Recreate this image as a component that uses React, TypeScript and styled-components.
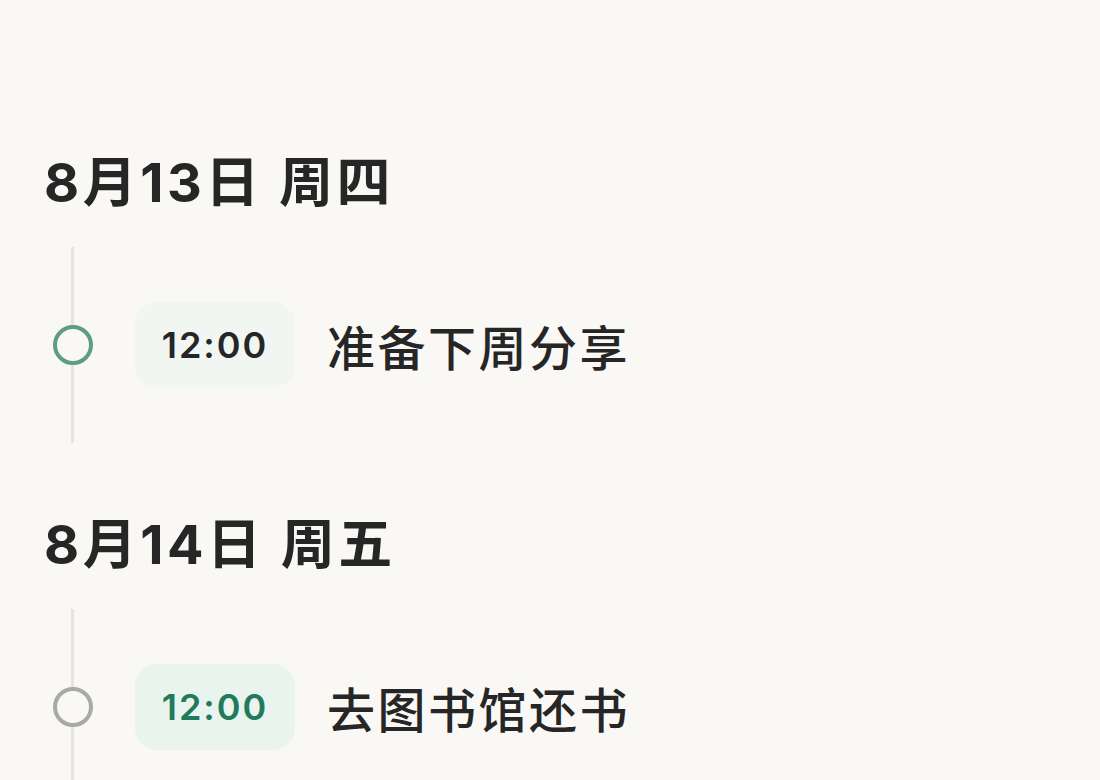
import React from 'react';
import styled, { createGlobalStyle } from 'styled-components';

const GlobalStyle = createGlobalStyle`
  html, body {
    margin: 0;
    padding: 0;
    background: #f9f8f5;
  }
  body {
    font-family: Inter, "Noto Sans CJK SC", sans-serif;
    color: #262626;
  }
`;

const Page = styled.div`
  padding: 147px 0 0 44px;
  height: 780px;
  box-sizing: border-box;
  overflow: hidden;
`;

const Day = styled.section`
  margin-bottom: 66px;
`;

const DayTitle = styled.h2`
  margin: 0;
  font-size: 54px;
  line-height: 72px;
  font-weight: 700;
  color: #262626;
  letter-spacing: 3.5px;
`;

const Timeline = styled.div`
  margin: 28px 0 0 27px;
  border-left: 3px solid #e6e4df;
  padding: 55px 0;
`;

const Item = styled.div`
  display: flex;
  align-items: center;
`;

const Dot = styled.span<{ $active?: boolean }>`
  width: 40px;
  height: 40px;
  box-sizing: border-box;
  border-radius: 50%;
  border: 4px solid ${p => (p.$active ? '#5f9d82' : '#a9a9a6')};
  background: #f9f8f5;
  margin-left: -21px;
  flex-shrink: 0;
`;

const TimeChip = styled.div<{ $highlight?: boolean }>`
  margin-left: 42px;
  width: 160px;
  height: 86px;
  border-radius: 22px;
  background: ${p => (p.$highlight ? '#e9f4ee' : '#f1f6f2')};
  color: ${p => (p.$highlight ? '#22795b' : '#262626')};
  display: flex;
  align-items: center;
  justify-content: center;
  font-size: 36px;
  font-weight: 600;
  letter-spacing: 2px;
`;

const Title = styled.div`
  margin-left: 32px;
  font-size: 48px;
  font-weight: 500;
  letter-spacing: 2.5px;
  color: #262626;
`;

const days = [
  { date: '8月13日 周四', time: '12:00', title: '准备下周分享', active: true, highlight: false },
  { date: '8月14日 周五', time: '12:00', title: '去图书馆还书', active: false, highlight: true },
];

export default function App() {
  return (
    <>
      <GlobalStyle />
      <Page>
        {days.map(d => (
          <Day key={d.date}>
            <DayTitle>{d.date}</DayTitle>
            <Timeline>
              <Item>
                <Dot $active={d.active} />
                <TimeChip $highlight={d.highlight}>{d.time}</TimeChip>
                <Title>{d.title}</Title>
              </Item>
            </Timeline>
          </Day>
        ))}
      </Page>
    </>
  );
}
